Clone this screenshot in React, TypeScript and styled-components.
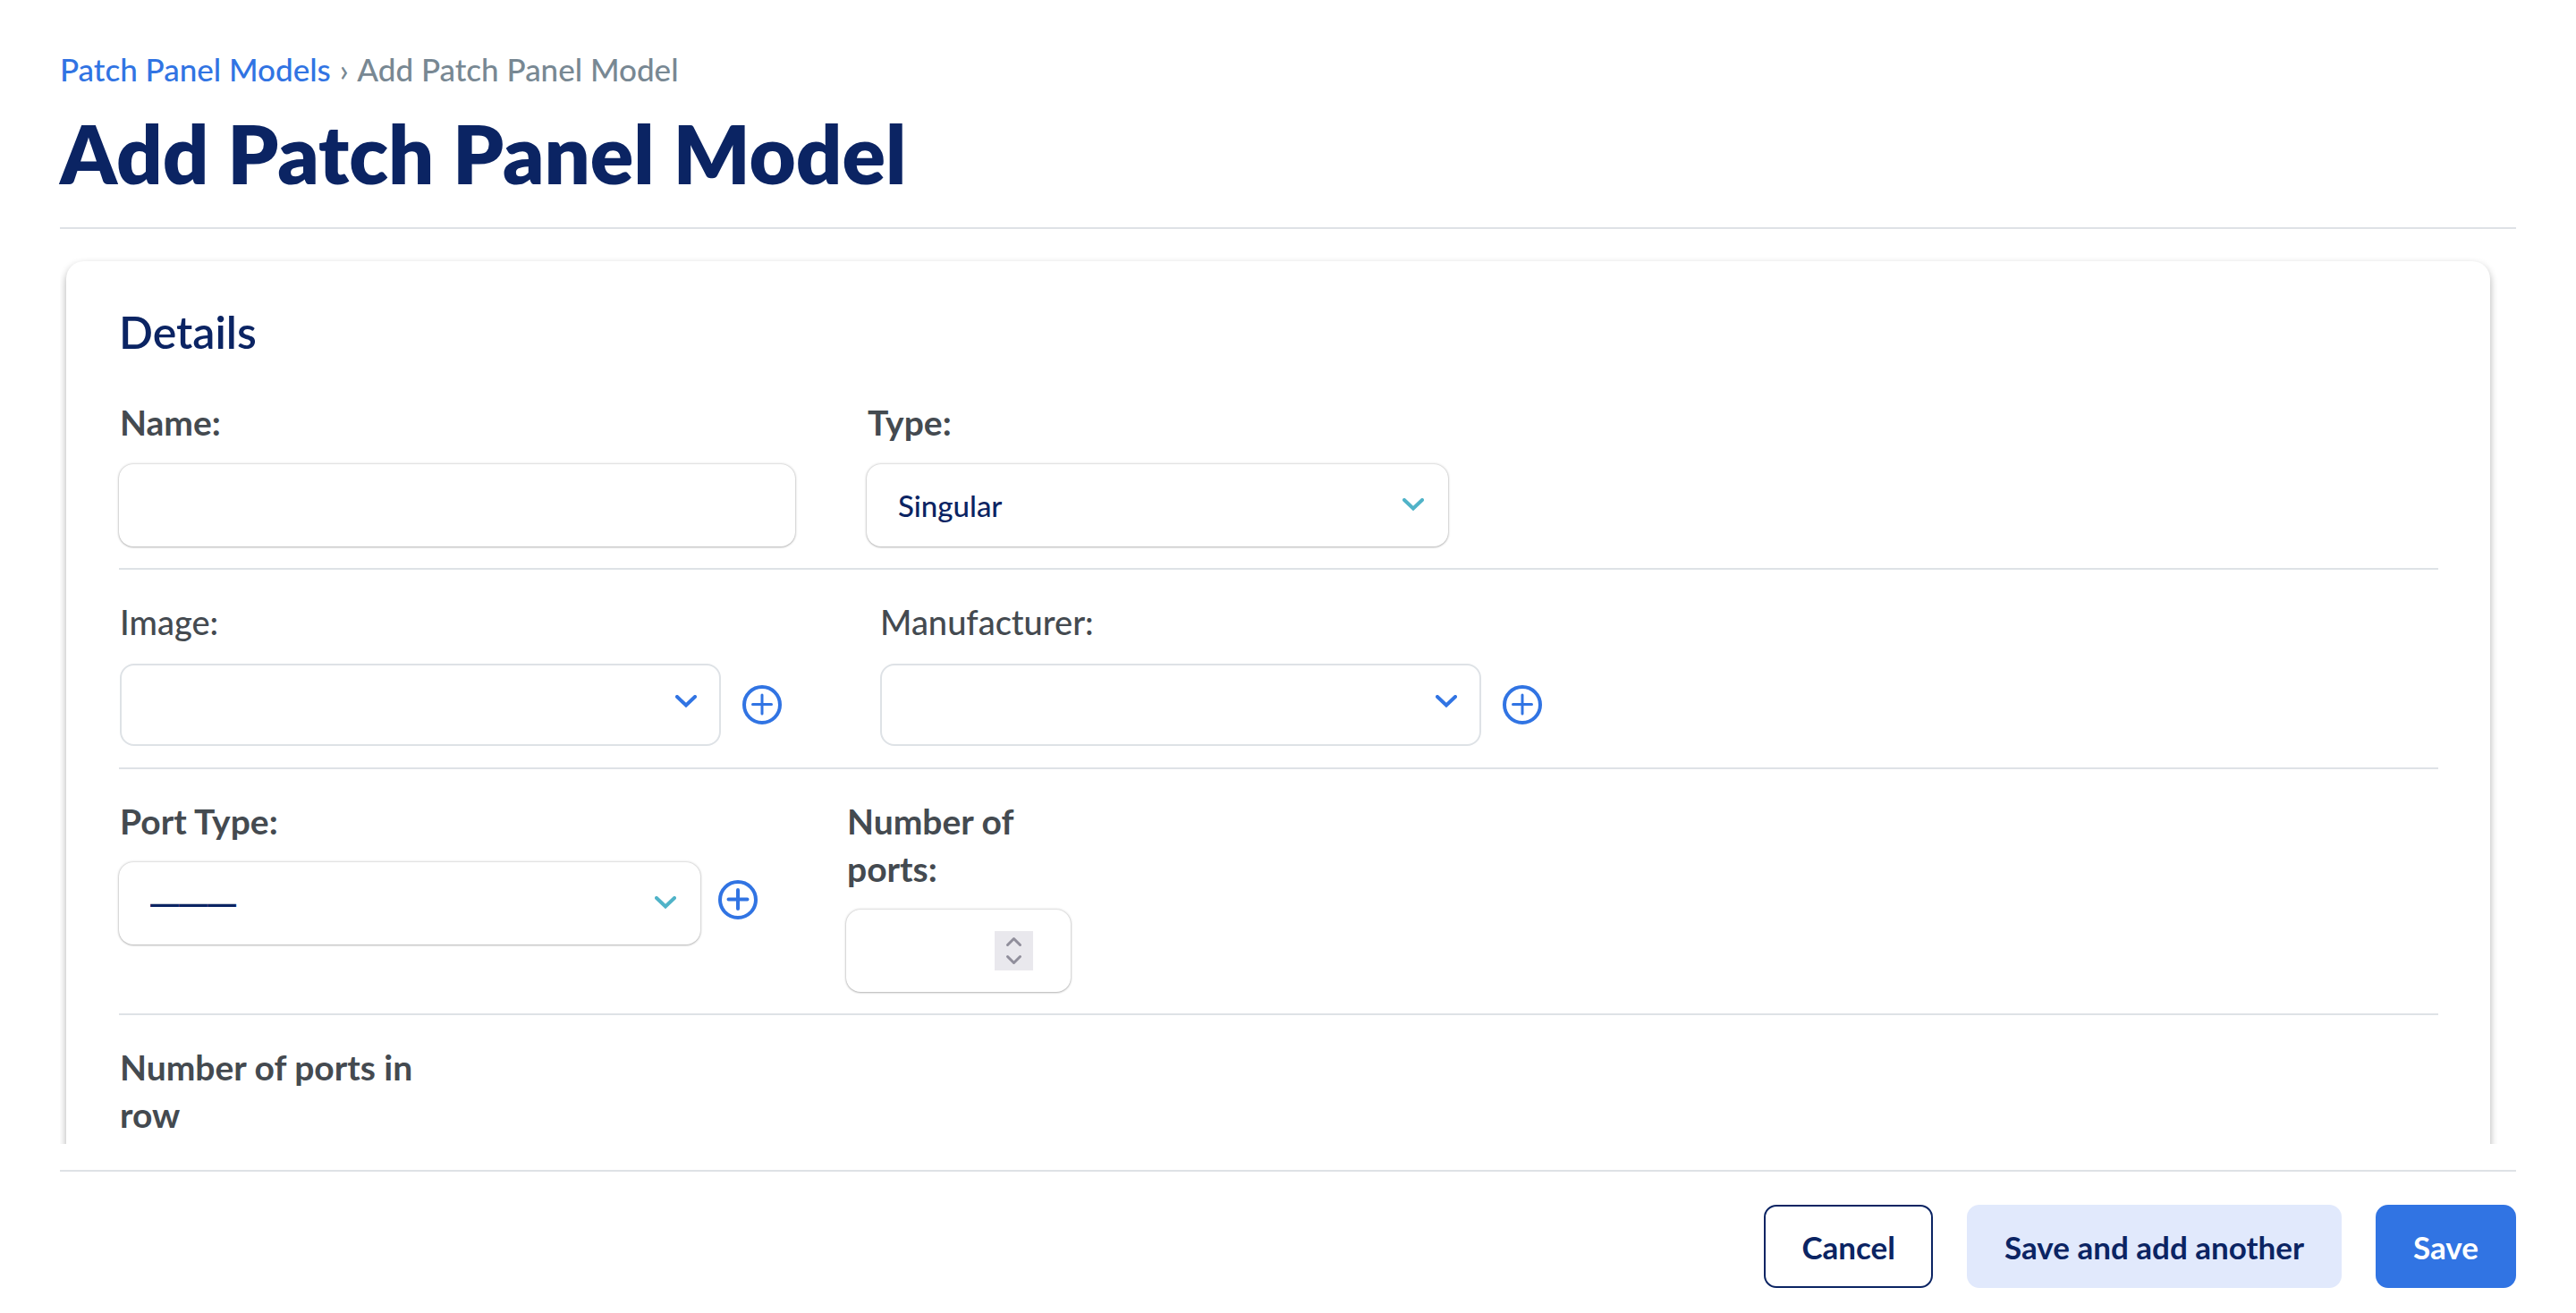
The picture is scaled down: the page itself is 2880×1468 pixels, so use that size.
import React from "react";
import styled, { createGlobalStyle } from "styled-components";

const color = {
  navy: "#0b2463",
  blue: "#3174e3",
  paleBlue: "#e1e9fc",
  teal: "#50b3c8",
  text: "#444a50",
  muted: "#788893",
  line: "#dee2e6",
};

const fieldShadow = "0 0 3px rgba(0, 0, 0, 0.3), 0 1px 2px rgba(0, 0, 0, 0.18)";

const GlobalStyle = createGlobalStyle`
  *, *::before, *::after { box-sizing: border-box; }
  body {
    margin: 0;
    background: #fff;
    color: ${color.text};
    font-family: Lato, "Open Sans", sans-serif;
  }
`;

const Page = styled.div`
  display: flex;
  flex-direction: column;
  height: 100vh;
  padding: 0 67px;
`;

const Header = styled.header`
  flex: none;
  padding: 55px 0 29px;
  border-bottom: 2px solid ${color.line};
`;

const Breadcrumbs = styled.nav`
  margin-bottom: 18px;
  font-size: 35px;
  font-weight: 500;
  line-height: 44px;
  color: ${color.muted};
`;

const CrumbLink = styled.a`
  color: ${color.blue};
  text-decoration: none;
`;

const Separator = styled.span`
  margin: 0 2px 0 1px;
`;

const Title = styled.h1`
  margin: 0;
  font-size: 90px;
  font-weight: 800;
  line-height: 108px;
  color: ${color.navy};
`;

const Main = styled.main`
  flex: 1;
  min-height: 0;
  overflow: auto;
  scrollbar-width: none;
  padding: 36px 29px 36px 7px;
`;

const Card = styled.section`
  padding: 49px 58px 49px 59px;
  border-radius: 20px;
  box-shadow: 0 4px 8px rgba(0, 0, 0, 0.32);
`;

const CardTitle = styled.h2`
  margin: 0 0 13px;
  font-size: 50px;
  font-weight: 600;
  line-height: 60px;
  color: ${color.navy};
`;

const Row = styled.div<{ $gap?: number; $inset?: boolean }>`
  display: flex;
  align-items: flex-start;
  gap: ${(p) => p.$gap ?? 80}px;
  padding: 32px 0 24px;
  border-bottom: 2px solid ${color.line};
  & > :first-child {
    margin-left: ${(p) => (p.$inset ? 1 : 0)}px;
  }
`;

const Field = styled.div<{ $tight?: boolean }>`
  display: flex;
  flex-direction: column;
  gap: ${(p) => (p.$tight ? 19 : 20)}px;
`;

const Label = styled.label<{ $light?: boolean; $width?: number }>`
  max-width: ${(p) => (p.$width ? `${p.$width}px` : "none")};
  padding-left: ${(p) => (p.$light ? 0 : 1)}px;
  font-size: ${(p) => (p.$light ? 38 : 39)}px;
  font-weight: ${(p) => (p.$light ? 500 : 700)};
  line-height: 53px;
`;

const Control = styled.div<{ $outlined?: boolean }>`
  display: flex;
  align-items: ${(p) => (p.$outlined ? "center" : "flex-start")};
  gap: ${(p) => (p.$outlined ? 24 : 20)}px;
`;

const Box = styled.div<{ $width: number }>`
  position: relative;
  width: ${(p) => p.$width}px;
`;

const TextInput = styled.input`
  display: block;
  width: 100%;
  height: 92px;
  padding: 0 35px;
  border: 0;
  border-radius: 16px;
  background: #fff;
  box-shadow: ${fieldShadow};
  color: ${color.navy};
  font: 500 33px Lato, sans-serif;
  appearance: textfield;
  &::-webkit-inner-spin-button {
    appearance: none;
  }
`;

const Select = styled.select<{ $outlined?: boolean; $blank?: boolean }>`
  display: block;
  width: 100%;
  height: 92px;
  padding: 0 35px;
  border: ${(p) => (p.$outlined ? `2px solid ${color.line}` : "0")};
  border-radius: 16px;
  background: #fff;
  box-shadow: ${(p) => (p.$outlined ? "none" : fieldShadow)};
  color: ${color.navy};
  font: ${(p) => (p.$blank ? '700 32px "Liberation Sans"' : "500 33px Lato")}, sans-serif;
  appearance: none;
`;

const Chevron = styled.svg<{ $outlined?: boolean }>`
  position: absolute;
  top: ${(p) => (p.$outlined ? 35 : 38)}px;
  right: 27px;
  width: 24px;
  height: 14px;
  fill: none;
  stroke: ${(p) => (p.$outlined ? color.blue : color.teal)};
  stroke-width: 4;
  stroke-linecap: round;
  stroke-linejoin: miter;
  pointer-events: none;
`;

const Spinner = styled.svg`
  position: absolute;
  top: 24px;
  right: 42px;
  width: 43px;
  height: 44px;
  background: #e9e8ed;
  fill: none;
  stroke: #908e9b;
  stroke-width: 3;
  stroke-linecap: round;
  stroke-linejoin: round;
  pointer-events: none;
`;

const AddButton = styled.button<{ $top: number }>`
  width: 44px;
  height: 44px;
  margin-top: ${(p) => p.$top}px;
  padding: 0;
  border: 0;
  background: none;
  color: ${color.blue};
  svg {
    display: block;
  }
`;

const Footer = styled.footer`
  flex: none;
  display: flex;
  justify-content: flex-end;
  gap: 38px;
  margin-top: 29px;
  padding: 37px 0 28px;
  border-top: 2px solid ${color.line};
`;

const Button = styled.button<{ $kind: "outline" | "soft" | "primary" }>`
  height: 93px;
  padding: 0 40px;
  border: 2px solid
    ${(p) => ({ outline: color.navy, soft: color.paleBlue, primary: color.blue })[p.$kind]};
  border-radius: 14px;
  background: ${(p) => ({ outline: "#fff", soft: color.paleBlue, primary: color.blue })[p.$kind]};
  color: ${(p) => (p.$kind === "primary" ? "#fff" : color.navy)};
  font: 700 35px/44px Lato, sans-serif;
`;

function SelectField(props: {
  id: string;
  label: string;
  width: number;
  outlined?: boolean;
  option?: string;
  add?: string;
}) {
  const { id, label, width, outlined, option = "———", add } = props;
  return (
    <Field $tight={!outlined && !!add}>
      <Label htmlFor={id} $light={outlined}>
        {label}
      </Label>
      <Control $outlined={outlined}>
        <Box $width={width}>
          <Select id={id} $outlined={outlined} $blank={option === "———"}>
            <option>{outlined ? "" : option}</option>
          </Select>
          <Chevron viewBox="0 0 24 14" $outlined={outlined} aria-hidden>
            <path d="M2 2l10 9.500L22 2" />
          </Chevron>
        </Box>
        {add && (
          <AddButton type="button" aria-label={add} $top={outlined ? 0 : 20}>
            <svg width="44" height="44" viewBox="0 0 44 44" fill="none" stroke="currentColor">
              <circle cx="22" cy="22" r="20" strokeWidth="4" />
              <path
                d="M22 11v21M11.500 21.500h21"
                strokeWidth={outlined ? 3 : 4}
                strokeLinecap="round"
              />
            </svg>
          </AddButton>
        )}
      </Control>
    </Field>
  );
}

function NumberField(props: { id: string; label: string; labelWidth: number }) {
  return (
    <Field $tight>
      <Label htmlFor={props.id} $width={props.labelWidth}>
        {props.label}
      </Label>
      <Box $width={251}>
        <TextInput id={props.id} type="number" />
        <Spinner viewBox="0 0 43 44" aria-hidden>
          <path d="M14.500 15.500l7-7 7 7M14.500 28.500l7 7 7-7" />
        </Spinner>
      </Box>
    </Field>
  );
}

export default function App() {
  return (
    <Page>
      <GlobalStyle />
      <Header>
        <Breadcrumbs>
          <CrumbLink href="#models">Patch Panel Models</CrumbLink> <Separator>›</Separator> Add Patch
          Panel Model
        </Breadcrumbs>
        <Title>Add Patch Panel Model</Title>
      </Header>
      <Main>
        <Card>
          <CardTitle>Details</CardTitle>
          <Row>
            <Field>
              <Label htmlFor="name">Name:</Label>
              <Box $width={756}>
                <TextInput id="name" type="text" />
              </Box>
            </Field>
            <SelectField id="type" label="Type:" width={650} option="Singular" />
          </Row>
          <Row $gap={110} $inset>
            <SelectField id="image" label="Image:" width={672} outlined add="Add image" />
            <SelectField
              id="manufacturer"
              label="Manufacturer:"
              width={672}
              outlined
              add="Add manufacturer"
            />
          </Row>
          <Row $gap={99}>
            <SelectField id="port-type" label="Port Type:" width={650} add="Add port type" />
            <NumberField id="ports" label="Number of ports:" labelWidth={240} />
          </Row>
          <Row>
            <NumberField id="ports-in-row" label="Number of ports in row" labelWidth={350} />
          </Row>
        </Card>
      </Main>
      <Footer>
        <Button type="button" $kind="outline">
          Cancel
        </Button>
        <Button type="submit" $kind="soft">
          Save and add another
        </Button>
        <Button type="submit" $kind="primary">
          Save
        </Button>
      </Footer>
    </Page>
  );
}
